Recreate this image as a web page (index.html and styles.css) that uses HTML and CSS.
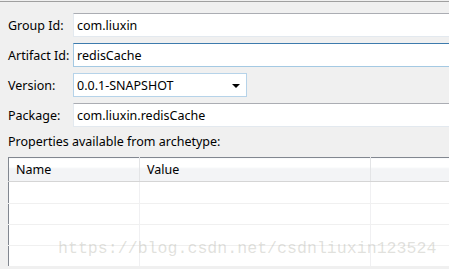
FILE: index.html
```html
<!DOCTYPE html>
<html lang="en">
<head>
  <meta charset="UTF-8" />
  <title>New Maven Project</title>
  <link rel="stylesheet" href="styles.css">
</head>
<body>
  <div class="form">
    <label for="groupId">Group Id:</label>
    <input type="text" id="groupId" class="field" value="com.liuxin">

    <label for="artifactId">Artifact Id:</label>
    <input type="text" id="artifactId" class="field focused" value="redisCache">

    <label for="version">Version:</label>
    <div class="combo" id="version">
      <span>0.0.1-SNAPSHOT</span>
      <span class="arrow"></span>
    </div>

    <label for="package">Package:</label>
    <input type="text" id="package" class="field" value="com.liuxin.redisCache">
  </div>

  <div class="props-label">Properties available from archetype:</div>

  <table class="props">
    <thead>
      <tr>
        <th class="col-name">Name</th>
        <th class="col-value">Value</th>
        <th></th>
      </tr>
    </thead>
    <tbody>
      <tr class="first"><td></td><td></td><td></td></tr>
      <tr><td></td><td></td><td></td></tr>
      <tr><td></td><td></td><td></td></tr>
      <tr><td></td><td></td><td></td></tr>
    </tbody>
  </table>

  <div class="watermark">https://blog.csdn.net/csdnliuxin123524</div>
</body>
</html>
```

FILE: styles.css
```css
html, body {
  margin: 0;
  height: 100%;
  overflow: hidden;
}
body {
  position: relative;
  background-color: #f0f0f0;
  border-top: 1px solid #a0a0a0;
  margin-top: 1px;
  padding: 11px 0 0 8px;
  font-family: "Noto Sans", Arial, sans-serif;
  font-size: 12.5px;
  color: #000;
  box-sizing: border-box;
}
.form {
  display: grid;
  grid-template-columns: 65px 1fr;
  row-gap: 6px;
  align-items: center;
  margin-right: -4px;
}
.field {
  height: 24px;
  box-sizing: border-box;
  margin: 0;
  padding: 0 3px;
  font-family: inherit;
  font-size: 12.5px;
  color: #000;
  background-color: #fff;
  border: 1px solid #e3e9ef;
  border-top-color: #abadb3;
  border-right: none;
  outline: none;
}
.field.focused {
  border-color: #a4c9e3;
  border-top-color: #3d7bad;
}
.combo {
  width: 174px;
  height: 24px;
  box-sizing: border-box;
  display: flex;
  align-items: center;
  justify-content: space-between;
  padding: 0 6px 0 3px;
  background-color: #fff;
  border: 1px solid #b6d3e9;
}
.arrow {
  width: 0;
  height: 0;
  border-left: 4px solid transparent;
  border-right: 4px solid transparent;
  border-top: 4px solid #000;
  margin-top: 1px;
}
.props-label {
  margin-top: 5px;
  height: 20px;
  line-height: 20px;
}
.props {
  margin-top: 5px;
  width: 460px;
  border-collapse: collapse;
  background-color: #fff;
  border-left: 1px solid #828790;
  border-top: 1px solid #828790;
}
.props th {
  height: 23px;
  padding: 0 0 0 7px;
  text-align: left;
  font-weight: normal;
  background: linear-gradient(#fff 0%, #fff 40%, #f3f4f6 42%, #f3f4f6 100%);
  border-bottom: 1px solid #d5d5d5;
  border-right: 1px solid #e3e4e6;
}
.col-name {
  width: 123px;
}
.col-value {
  width: 223px;
}
.props td {
  height: 20px;
  padding: 0;
  border-bottom: 1px solid #f0f0f0;
  border-right: 1px solid #f0f0f2;
}
.props tr.first td {
  height: 21px;
}
.watermark {
  position: absolute;
  left: 58px;
  top: 237px;
  font-family: "Liberation Mono", monospace;
  font-size: 16.6px;
  color: rgba(175, 175, 165, 0.38);
  white-space: nowrap;
}
```
